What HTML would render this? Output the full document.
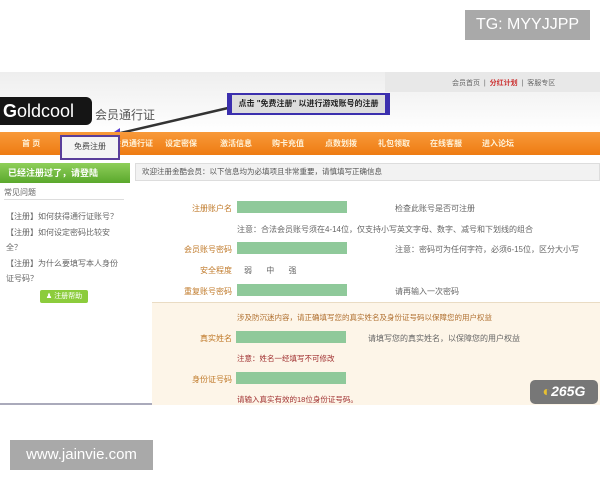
<!DOCTYPE html>
<html><head><meta charset="utf-8"><style>
*{margin:0;padding:0;box-sizing:border-box}
body{width:600px;height:480px;background:#fff;position:relative;overflow:hidden;font-family:"Liberation Sans","Noto Sans CJK SC",sans-serif}
.a{position:absolute;white-space:nowrap}
.s{font-size:8px;color:#666}
.lab{font-size:8px;color:#c07a2a;text-align:right;width:80px}
.in{background:#8fc99a;height:12px;width:110px}
.nav span{position:absolute;top:6px;font-size:8px;color:#fff2d8;font-weight:bold}
</style></head><body>
<div class="a" style="left:465px;top:10px;width:125px;height:30px;background:#a9a9a9;color:#fff;font-size:16px;line-height:30px;text-align:center">TG: MYYJJPP</div>
<div class="a" style="left:0;top:72px;width:600px;height:60px;background:linear-gradient(#eeeeee,#f8f8f8 60%,#fff)"></div>
<div class="a" style="left:385px;top:72px;width:215px;height:20px;background:#e8e8e8"></div>
<div class="a s" style="left:452px;top:78px;font-size:7px">会员首页 &nbsp;| &nbsp;<b style="color:#c33">分红计划</b> &nbsp;| &nbsp;客服专区</div>
<div class="a" style="left:0;top:97px;width:92px;height:28px;background:#151515;border-radius:0 6px 6px 0;color:#fff;font-size:18px;line-height:28px;padding-left:3px;font-weight:bold">G<span style="font-weight:normal">oldcool</span></div>
<div class="a" style="left:95px;top:106px;font-size:12px;color:#555">会员通行证</div>
<svg class="a" style="left:100px;top:100px" width="170" height="60"><line x1="128" y1="8" x2="12" y2="35" stroke="#333" stroke-width="2.5"/><polygon points="5,38 20,28 20,40" fill="#5a3ed0"/></svg>
<div class="a" style="left:227px;top:93px;width:163px;height:22px;background:#ddd;border:2px solid #3b2fae;border-left:5px solid #3b2fae;border-right:5px solid #3b2fae;font-size:8px;font-weight:bold;color:#222;line-height:18px;text-align:center">点击 "免费注册" 以进行游戏账号的注册</div>
<div class="a nav" style="left:0;top:132px;width:600px;height:23px;background:linear-gradient(#f89a3a,#ee7b12)">
<span style="left:22px">首 页</span><span style="left:113px">会员通行证</span><span style="left:165px">设定密保</span><span style="left:220px">激活信息</span><span style="left:272px">购卡充值</span><span style="left:325px">点数划拨</span><span style="left:378px">礼包领取</span><span style="left:430px">在线客服</span><span style="left:482px">进入论坛</span></div>
<div class="a" style="left:60px;top:135px;width:60px;height:25px;background:#f4f4f4;border:2px solid #5a3e9a;font-size:8px;color:#444;text-align:center;line-height:20px">免费注册</div>
<div class="a" style="left:0;top:163px;width:130px;height:20px;background:linear-gradient(#8fcf5a,#5aa82c);color:#fff;font-size:9px;font-weight:bold;line-height:20px;padding-left:8px">已经注册过了，请登陆</div>
<div class="a" style="left:135px;top:163px;width:465px;height:18px;background:#f2f2f2;border:1px solid #ddd;font-size:7.5px;color:#555;line-height:16px;padding-left:6px">欢迎注册金酷会员：以下信息均为必填项且非常重要，请慎填写正确信息</div>
<div class="a s" style="left:4px;top:187px">常见问题</div>
<div class="a" style="left:4px;top:199px;width:120px;height:1px;background:#ddd"></div>
<div class="a s" style="left:6px;top:209px;line-height:15.5px;white-space:normal;width:115px">【注册】如何获得通行证账号？<br>【注册】如何设定密码比较安全？<br>【注册】为什么要填写本人身份证号码？</div>
<div class="a" style="left:40px;top:290px;width:48px;height:13px;background:#8ccc3c;border-radius:2px;color:#fff;font-size:7px;line-height:13px;text-align:center">♟ 注册帮助</div>
<div class="a lab" style="left:152px;top:203px">注册账户名</div><div class="a in" style="left:237px;top:201px"></div><div class="a s" style="left:395px;top:203px">检查此账号是否可注册</div>
<div class="a s" style="left:237px;top:224px">注意：合法会员账号须在4-14位，仅支持小写英文字母、数字、减号和下划线的组合</div>
<div class="a lab" style="left:152px;top:244px">会员账号密码</div><div class="a in" style="left:237px;top:242px"></div><div class="a s" style="left:395px;top:244px">注意：密码可为任何字符，必须6-15位，区分大小写</div>
<div class="a lab" style="left:152px;top:265px">安全程度</div><div class="a s" style="left:244px;top:265px;word-spacing:12px">弱 中 强</div>
<div class="a lab" style="left:152px;top:286px">重复账号密码</div><div class="a in" style="left:237px;top:284px"></div><div class="a s" style="left:395px;top:286px">请再输入一次密码</div>
<div class="a" style="left:152px;top:302px;width:448px;height:103px;background:#fdf5e8;border-top:1px solid #eadcc4"></div>
<div class="a" style="left:237px;top:312px;font-size:7.5px;color:#b07030">涉及防沉迷内容，请正确填写您的真实姓名及身份证号码以保障您的用户权益</div>
<div class="a lab" style="left:152px;top:333px">真实姓名</div><div class="a in" style="left:236px;top:331px"></div><div class="a s" style="left:368px;top:333px">请填写您的真实姓名，以保障您的用户权益</div>
<div class="a" style="left:237px;top:353px;font-size:7.5px;color:#a03030">注意：姓名一经填写不可修改</div>
<div class="a lab" style="left:152px;top:374px">身份证号码</div><div class="a in" style="left:236px;top:372px"></div>
<div class="a" style="left:237px;top:394px;font-size:7.5px;color:#a03030">请输入真实有效的18位身份证号码。</div>
<div class="a" style="left:0;top:403px;width:152px;height:2px;background:#aab"></div>
<div class="a" style="left:530px;top:380px;width:68px;height:24px;background:#777;border-radius:5px;color:#fff;font-size:14px;font-weight:bold;line-height:22px;text-align:center;font-style:italic"><span style="color:#e8c030">◐</span>265G</div>
<div class="a" style="left:10px;top:440px;width:143px;height:30px;background:#a9a9a9;color:#fff;font-size:15px;line-height:30px;text-align:center">www.jainvie.com</div>
</body></html>
